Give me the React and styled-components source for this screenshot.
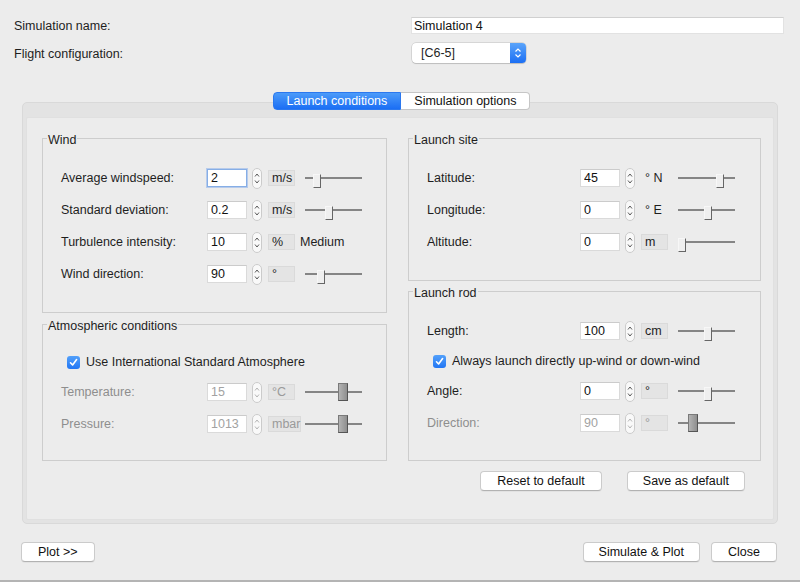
import React from 'react';
import styled, { createGlobalStyle, css } from 'styled-components';

const GlobalStyle = createGlobalStyle`
  html, body { margin: 0; padding: 0; background: #ececec; }
  body {
    font-family: "Liberation Sans", Arial, sans-serif;
    font-size: 12.5px;
    color: #1e1e1e;
  }
  * { box-sizing: border-box; }
`;

const Window = styled.div`
  width: 800px;
  height: 582px;
  overflow: hidden;
  display: flex;
  flex-direction: column;
  background: #ececec;
`;

// top form
const TopForm = styled.div`
  display: grid;
  grid-template-columns: 397px 1fr;
  grid-template-rows: 17px 20px;
  row-gap: 9px;
  align-items: center;
  padding: 17px 16px 0 14px;
`;

const TopLabel = styled.div`
  line-height: 16px;
  padding-top: 1px;
`;

const NameInput = styled.input`
  width: 100%;
  height: 17px;
  margin: 0;
  padding: 0 2px;
  border: 1px solid #e2e2e2;
  border-top-color: #d0d0d0;
  background: #fff;
  font: inherit;
  color: #111;
  outline: none;
`;

const Select = styled.div`
  width: 114px;
  height: 20px;
  margin-left: 1px;
  display: flex;
  background: #fff;
  border-radius: 4px;
  box-shadow: 0 0 0 0.5px rgba(0, 0, 0, 0.18), 0 1px 1px rgba(0, 0, 0, 0.12);
  overflow: hidden;
`;

const SelectText = styled.div`
  flex: 1;
  padding-left: 9px;
  line-height: 20px;
`;

const SelectArrow = styled.div`
  width: 16px;
  display: flex;
  align-items: center;
  justify-content: center;
  background: linear-gradient(#5aa4fa, #1c6ff4);
`;

// tabbed pane
const TabStrip = styled.div`
  display: flex;
  justify-content: center;
  margin-top: 29px;
  margin-bottom: -8px;
  padding-left: 3px;
  position: relative;
  z-index: 1;
`;

const Tab = styled.div`
  height: 18px;
  line-height: 16px;
  padding: 0 13px;
  border: 1px solid #c6c6c6;
  ${(p) =>
    p.active
      ? css`
          background: linear-gradient(#4c9bf9, #1b6ef4);
          border-color: #2b78ef;
          color: #fff;
          border-radius: 4px 0 0 4px;
        `
      : css`
          background: #fff;
          border-left: none;
          color: #111;
          border-radius: 0 4px 4px 0;
        `}
`;

const Pane = styled.div`
  margin: 0 22px;
  height: 422px;
  background: #e3e3e3;
  border: 1px solid #d9d9d9;
  border-radius: 5px;
  padding: 14px 3px 3px;
`;

const PaneBody = styled.div`
  height: 100%;
  background: #ececec;
  border: 1px solid #e0e0e0;
  border-radius: 2px;
  display: grid;
  grid-template-columns: 345px 353px;
  column-gap: 21px;
  align-items: start;
  padding: 20px 0 0 15px;
`;

const Column = styled.div`
  display: flex;
  flex-direction: column;
`;

const GroupStack = styled.div`
  height: 323px;
  display: flex;
  flex-direction: column;
  gap: ${(p) => p.gap}px;
`;

const Group = styled.section`
  border: 1px solid #cdcdcd;
  padding: 0 0 0 18px;
  ${(p) => (p.h ? `height: ${p.h}px; flex: none;` : 'flex: 1;')}
`;

const GroupTitle = styled.div`
  width: fit-content;
  margin: -6px 0 0 -14px;
  padding: 0 1px;
  line-height: 15px;
  background: #ececec;
`;

const Rows = styled.div`
  margin-top: 20px;
  display: flex;
  flex-direction: column;
  gap: 12px;
`;

const FieldRow = styled.div`
  height: 20px;
  display: flex;
  align-items: center;
`;

const Label = styled.div`
  width: ${(p) => p.w}px;
  flex: none;
  color: ${(p) => (p.disabled ? '#8e8e8e' : '#1e1e1e')};
`;

const NumInput = styled.input`
  width: 40px;
  height: 18px;
  margin: 0;
  padding: 0 3px;
  border: 1px solid #dadada;
  border-top-color: #cbcbcb;
  background: #fff;
  font: inherit;
  color: ${(p) => (p.disabled ? '#a2a2a2' : '#111')};
  outline: none;
  ${(p) =>
    p.focused &&
    css`
      border-color: #86aee6;
      box-shadow: 0 0 0 1px rgba(120, 165, 235, 0.45);
    `}
`;

const SpinWrap = styled.div`
  margin-left: 5px;
  display: flex;
`;

const Unit = styled.div`
  margin-left: 6px;
  width: 27px;
  height: 16px;
  line-height: 14px;
  padding-left: 3px;
  white-space: nowrap;
  color: ${(p) => (p.disabled ? '#9a9a9a' : '#1e1e1e')};
  ${(p) =>
    !p.plain &&
    css`
      background: #e4e4e4;
      border: 1px solid #dadada;
    `}
  ${(p) => p.plain && 'border: 1px solid transparent;'}
  ${(p) => p.wide && 'width: 33px;'}
`;

const Extra = styled.div`
  margin-left: 5px;
`;

const SliderBox = styled.div`
  margin-left: ${(p) => (p.shift ? 4 : 10)}px;
  width: 57px;
  height: 20px;
  position: relative;
  flex: none;
  &::before {
    content: '';
    position: absolute;
    left: 0;
    right: 0;
    top: 9px;
    height: 2px;
    background: #858585;
  }
`;

const Thumb = styled.div`
  position: absolute;
  ${(p) =>
    p.disabled
      ? css`
          top: 1px;
          width: 10px;
          height: 18px;
          background: linear-gradient(90deg, #b3b3b3, #8f8f8f);
          border: 1px solid #7a7a7a;
          border-right-color: #555;
          border-bottom-color: #555;
        `
      : css`
          top: 6px;
          width: 8px;
          height: 14px;
          background: #efefef;
          border: 1px solid #f7f7f7;
          border-right-color: #666;
          border-bottom-color: #666;
        `}
`;

const CheckRow = styled.label`
  height: 16px;
  display: flex;
  align-items: center;
  gap: 6px;
  margin-left: 6px;
`;

const CheckBox = styled.span`
  width: 13px;
  height: 13px;
  border-radius: 3px;
  background: linear-gradient(#52a0fa, #2276f4);
  display: flex;
  align-items: center;
  justify-content: center;
`;

const ButtonRow = styled.div`
  display: flex;
  justify-content: flex-end;
  gap: 25px;
  margin-top: 10px;
  padding-right: 16px;
`;

const Button = styled.button`
  height: 20px;
  margin: 0;
  padding: 0 ${(p) => p.pad || 16}px;
  background: #fff;
  border: 1px solid #cbcbcb;
  border-bottom-color: #b2b2b2;
  border-radius: 4px;
  font: inherit;
  color: #111;
  line-height: 18px;
  box-shadow: 0 1px 0 rgba(0, 0, 0, 0.04);
`;

const BottomBar = styled.div`
  display: flex;
  align-items: center;
  gap: 11px;
  margin-top: 18px;
  padding: 0 23px 0 21px;
`;

const Spacer = styled.div`
  flex: 1;
`;

const WindowEdge = styled.div`
  margin-top: auto;
  height: 2px;
  background: #b4b4b4;
`;

function Spinner({ disabled }) {
  const c = disabled ? '#b5b5b5' : '#5a5a5a';
  return (
    <svg width="10" height="21" viewBox="0 0 10 21">
      <rect x="0.5" y="0.5" width="9" height="20" rx="4.5" fill="#f9f9f9" stroke="#cbcbcb" />
      <path d="M3 8.5 L5 6 L7 8.5" fill="none" stroke={c} strokeWidth="1" />
      <path d="M3 12.5 L5 15 L7 12.5" fill="none" stroke={c} strokeWidth="1" />
    </svg>
  );
}

function Slider({ at, disabled, shift }) {
  return (
    <SliderBox shift={shift}>
      <Thumb disabled={disabled} style={{ left: at }} />
    </SliderBox>
  );
}

function Check({ children }) {
  return (
    <CheckRow>
      <CheckBox>
        <svg width="9" height="9" viewBox="0 0 9 9">
          <path d="M1.5 4.8 L3.6 7 L7.6 1.6" fill="none" stroke="#fff" strokeWidth="1.6" strokeLinecap="round" strokeLinejoin="round" />
        </svg>
      </CheckBox>
      {children}
    </CheckRow>
  );
}

function Field({ label, value, unit, lw, slider, disabled, focused, plain, wide, extra }) {
  return (
    <FieldRow>
      <Label w={lw} disabled={disabled}>{label}</Label>
      <NumInput defaultValue={value} disabled={disabled} focused={focused} />
      <SpinWrap>
        <Spinner disabled={disabled} />
      </SpinWrap>
      <Unit plain={plain} wide={wide} disabled={disabled}>{unit}</Unit>
      {extra && <Extra>{extra}</Extra>}
      {slider !== undefined && <Slider at={slider} disabled={disabled} shift={wide} />}
    </FieldRow>
  );
}

export default function App() {
  return (
    <>
      <GlobalStyle />
      <Window>
        <TopForm>
          <TopLabel>Simulation name:</TopLabel>
          <NameInput defaultValue="Simulation 4" />
          <TopLabel>Flight configuration:</TopLabel>
          <Select>
            <SelectText>[C6-5]</SelectText>
            <SelectArrow>
              <svg width="8" height="12" viewBox="0 0 8 12">
                <path d="M1.5 4.5 L4 2 L6.5 4.5" fill="none" stroke="#fff" strokeWidth="1.2" />
                <path d="M1.5 7.5 L4 10 L6.5 7.5" fill="none" stroke="#fff" strokeWidth="1.2" />
              </svg>
            </SelectArrow>
          </Select>
        </TopForm>

        <TabStrip>
          <Tab active>Launch conditions</Tab>
          <Tab>Simulation options</Tab>
        </TabStrip>

        <Pane>
          <PaneBody>
            <Column>
              <GroupStack gap={11}>
                <Group h={175}>
                  <GroupTitle>Wind</GroupTitle>
                  <Rows>
                    <Field lw={146} label="Average windspeed:" value="2" unit="m/s" slider={8} focused />
                    <Field lw={146} label="Standard deviation:" value="0.2" unit="m/s" slider={20} />
                    <Field lw={146} label="Turbulence intensity:" value="10" unit="%" extra="Medium" />
                    <Field lw={146} label="Wind direction:" value="90" unit="°" slider={12} />
                  </Rows>
                </Group>
                <Group>
                  <GroupTitle>Atmospheric conditions</GroupTitle>
                  <Rows>
                    <Check>Use International Standard Atmosphere</Check>
                    <Field lw={146} label="Temperature:" value="15" unit="°C" slider={33} disabled />
                    <Field lw={146} label="Pressure:" value="1013" unit="mbar" slider={33} disabled wide />
                  </Rows>
                </Group>
              </GroupStack>
            </Column>

            <Column>
              <GroupStack gap={10}>
                <Group h={143}>
                  <GroupTitle>Launch site</GroupTitle>
                  <Rows>
                    <Field lw={153} label="Latitude:" value="45" unit="° N" slider={38} plain />
                    <Field lw={153} label="Longitude:" value="0" unit="° E" slider={26} plain />
                    <Field lw={153} label="Altitude:" value="0" unit="m" slider={0} />
                  </Rows>
                </Group>
                <Group>
                  <GroupTitle>Launch rod</GroupTitle>
                  <Rows>
                    <Field lw={153} label="Length:" value="100" unit="cm" slider={26} />
                    <Check>Always launch directly up-wind or down-wind</Check>
                    <Field lw={153} label="Angle:" value="0" unit="°" slider={26} />
                    <Field lw={153} label="Direction:" value="90" unit="°" slider={10} disabled />
                  </Rows>
                </Group>
              </GroupStack>
              <ButtonRow>
                <Button pad={16}>Reset to default</Button>
                <Button pad={15}>Save as default</Button>
              </ButtonRow>
            </Column>
          </PaneBody>
        </Pane>

        <BottomBar>
          <Button>Plot &gt;&gt;</Button>
          <Spacer />
          <Button pad={15}>Simulate &amp; Plot</Button>
          <Button>Close</Button>
        </BottomBar>
        <WindowEdge />
      </Window>
    </>
  );
}
